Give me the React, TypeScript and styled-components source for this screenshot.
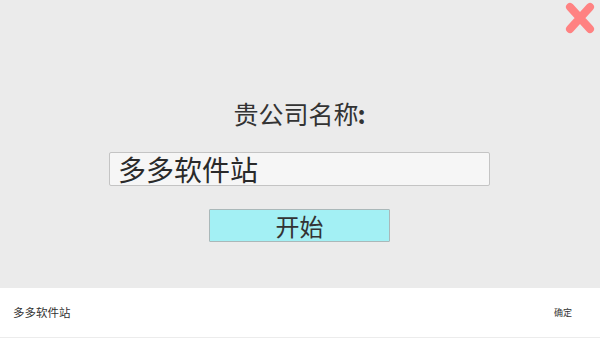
import React from "react";
import styled, { createGlobalStyle } from "styled-components";

const Global = createGlobalStyle`
  html, body { margin: 0; padding: 0; }
  body { width: 600px; height: 338px; overflow: hidden; background: #ebebeb; font-family: "Noto Sans CJK SC", "Noto Sans", sans-serif; }
  #root { width: 600px; height: 338px; }
`;

const Page = styled.div`
  width: 600px;
  height: 338px;
  display: flex;
  flex-direction: column;
  position: relative;
`;

const Main = styled.main`
  flex: 1;
  display: flex;
  flex-direction: column;
  align-items: center;
  padding-top: 97px;
  padding-right: 1px;
  box-sizing: border-box;
  background: #ebebeb;
`;

const Title = styled.div`
  font-size: 25px;
  line-height: 32px;
  height: 32px;
  color: #333333;
`;

const Colon = styled.span`
  font-weight: 700;
  margin-left: -1px;
`;

const NameInput = styled.input`
  margin-top: 23px;
  width: 381px;
  height: 34px;
  box-sizing: border-box;
  border: 1px solid #c4c4c4;
  border-radius: 2px;
  background: #f6f6f6;
  padding: 0 0 0 8px;
  font-family: "Noto Sans CJK SC", "Noto Sans", sans-serif;
  font-size: 28px;
  color: #2a2a2a;
  outline: none;
`;

const StartButton = styled.button`
  margin-top: 23px;
  width: 181px;
  height: 33px;
  box-sizing: border-box;
  border: 1px solid #aab8b9;
  border-radius: 1px;
  background: #a3f0f4;
  font-family: "Noto Sans CJK SC", "Noto Sans", sans-serif;
  font-size: 24px;
  line-height: 31px;
  color: #333333;
  padding: 0;
`;

const CloseButton = styled.button`
  position: absolute;
  top: 2px;
  right: 4px;
  width: 32px;
  height: 32px;
  border: none;
  background: transparent;
  padding: 0;
  display: flex;
  align-items: center;
  justify-content: center;
`;

const BottomBar = styled.footer`
  height: 50px;
  box-sizing: border-box;
  background: #ffffff;
  border-bottom: 1px solid #ececec;
  display: flex;
  align-items: center;
  justify-content: space-between;
  padding: 0 28px 0 13px;
`;

const BarText = styled.span<{ $size: number }>`
  font-size: ${(p) => p.$size}px;
  color: #333333;
  line-height: 1;
`;

export default function App() {
  return (
    <Page>
      <Global />
      <Main>
        <Title>
          贵公司名称<Colon>:</Colon>
        </Title>
        <NameInput defaultValue="多多软件站" />
        <StartButton>开始</StartButton>
      </Main>
      <CloseButton aria-label="关闭">
        <svg width="30" height="32" viewBox="0 0 30 32">
          <path d="M5 5 L25 27 M25 5 L5 27" stroke="#ff8282" strokeWidth="8" strokeLinecap="round" fill="none" />
        </svg>
      </CloseButton>
      <BottomBar>
        <BarText $size={11.5}>多多软件站</BarText>
        <BarText $size={9}>确定</BarText>
      </BottomBar>
    </Page>
  );
}
